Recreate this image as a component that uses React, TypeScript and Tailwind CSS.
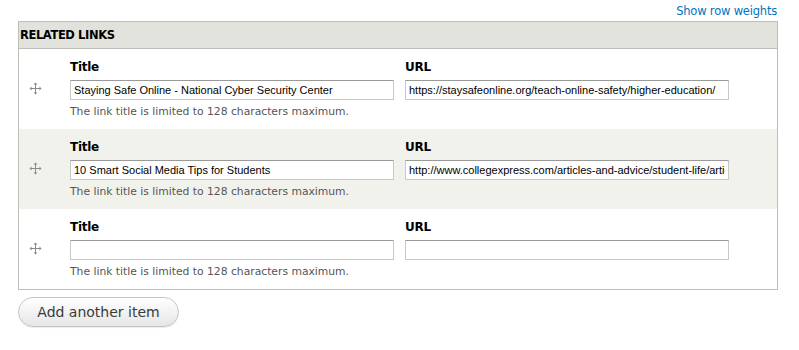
const rows = [
  {
    title: "Staying Safe Online - National Cyber Security Center",
    url: "https://staysafeonline.org/teach-online-safety/higher-education/",
  },
  {
    title: "10 Smart Social Media Tips for Students",
    url: "http://www.collegexpress.com/articles-and-advice/student-life/articles/living-campus/10-smart-social-media-tips-students/",
  },
  { title: "", url: "" },
];

function DragHandle() {
  return (
    <svg width="13" height="13" viewBox="0 0 13 13" className="text-[#8a8a8a]">
      <path d="M6.5 1v11M1 6.5h11" stroke="currentColor" strokeWidth="1" />
      <path d="M6.5 0.5l-2 2h4zM6.5 12.5l-2-2h4zM0.5 6.5l2-2v4zM12.5 6.5l-2-2v4z" fill="currentColor" />
    </svg>
  );
}

function TextBox({ value }: { value: string }) {
  return (
    <input
      type="text"
      defaultValue={value}
      className="h-[20px] w-[324px] border border-[#c8c8c8] border-t-[#9a9a9a] bg-white px-[3px] text-[11px] text-black outline-none font-['Liberation_Sans',Arial,sans-serif]"
    />
  );
}

export default function App() {
  return (
    <div className="w-[799px] h-[350px] bg-white font-['DejaVu_Sans',sans-serif] text-[#222]">
      <div className="flex h-[21px] items-center justify-end pr-[22px] pt-[2px]">
        <a href="#" className="text-[11.5px] tracking-[-0.2px] text-[#0074bd]">
          Show row weights
        </a>
      </div>

      <div className="ml-[18px] w-[760px] border border-[#bfbfba]">
        <div className="flex h-[27px] items-center border-b border-[#bfbfba] bg-[#e1e2dc] px-[1px] pt-[2px] text-[11.5px] tracking-[-0.4px] font-bold text-black">
          RELATED LINKS
        </div>
        {rows.map((row, i) => (
          <div
            key={i}
            className={`flex h-[80px] items-start ${i === 1 ? "bg-[#f2f2ed]" : "bg-white"}`}
          >
            <div className="flex w-[51px] shrink-0 justify-end pt-[33px] pr-[28px]">
              <DragHandle />
            </div>
            <div className="w-[335px] shrink-0 pt-[9px]">
              <div className="h-[19px] text-[12px] tracking-[-0.3px] font-bold text-black">Title</div>
              <TextBox value={row.title} />
              <div className="mt-[3px] text-[10.75px] text-[#555]">
                The link title is limited to 128 characters maximum.
              </div>
            </div>
            <div className="pt-[9px]">
              <div className="h-[19px] text-[12px] tracking-[-0.3px] font-bold text-black">URL</div>
              <TextBox value={row.url} />
            </div>
          </div>
        ))}
      </div>

      <button className="ml-[18px] mt-[7px] h-[30px] w-[161px] rounded-full border border-[#c6c6c6] bg-gradient-to-b from-white to-[#e6e6e6] text-[14px] text-[#3a3a3a] shadow-[0_1px_1px_rgba(0,0,0,0.08)]">
        Add another item
      </button>
    </div>
  );
}
